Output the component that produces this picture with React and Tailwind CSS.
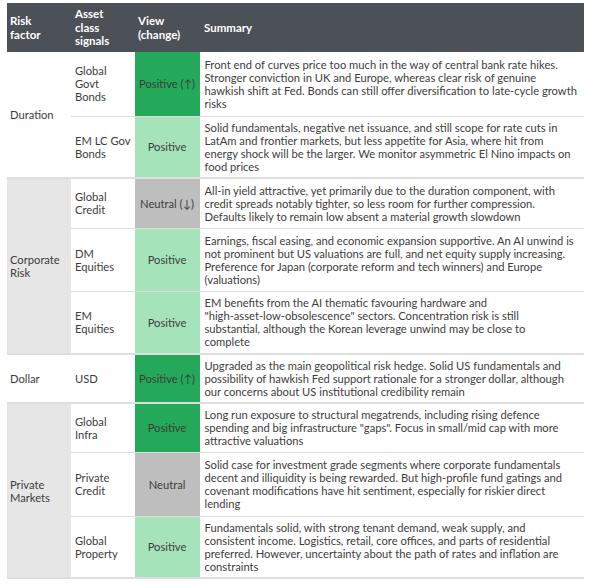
import React from 'react';

const rows = [
  {
    group: 'Duration', span: 2, shaded: false, h: 'h-[64px]',
    asset: ['Global', 'Govt', 'Bonds'], view: 'Positive (↑)', tone: 'dark',
    text: [
      'Front end of curves price too much in the way of central bank rate hikes.',
      'Stronger conviction in UK and Europe, whereas clear risk of genuine',
      'hawkish shift at Fed. Bonds can still offer diversification to late-cycle growth',
      'risks',
    ],
  },
  {
    asset: ['EM LC Gov', 'Bonds'], view: 'Positive', tone: 'light', last: true, h: 'h-[62px]',
    text: [
      'Solid fundamentals, negative net issuance, and still scope for rate cuts in',
      'LatAm and frontier markets, but less appetite for Asia, where hit from',
      'energy shock will be the larger. We monitor asymmetric El Nino impacts on',
      'food prices',
    ],
  },
  {
    group: 'Corporate Risk', span: 3, shaded: true, h: 'h-[50px]',
    asset: ['Global', 'Credit'], view: 'Neutral (↓)', tone: 'gray',
    text: [
      'All-in yield attractive, yet primarily due to the duration component, with',
      'credit spreads notably tighter, so less room for further compression.',
      'Defaults likely to remain low absent a material growth slowdown',
    ],
  },
  {
    asset: ['DM', 'Equities'], view: 'Positive', tone: 'light', h: 'h-[63px]',
    text: [
      'Earnings, fiscal easing, and economic expansion supportive. An AI unwind is',
      'not prominent but US valuations are full, and net equity supply increasing.',
      'Preference for Japan (corporate reform and tech winners) and Europe',
      '(valuations)',
    ],
  },
  {
    asset: ['EM', 'Equities'], view: 'Positive', tone: 'light', last: true, h: 'h-[63px]',
    text: [
      'EM benefits from the AI thematic favouring hardware and',
      '"high-asset-low-obsolescence" sectors. Concentration risk is still',
      'substantial, although the Korean leverage unwind may be close to',
      'complete',
    ],
  },
  {
    group: 'Dollar', span: 1, shaded: false, h: 'h-[49px]',
    asset: ['USD'], view: 'Positive (↑)', tone: 'dark', last: true,
    text: [
      'Upgraded as the main geopolitical risk hedge. Solid US fundamentals and',
      'possibility of hawkish Fed support rationale for a stronger dollar, although',
      'our concerns about US institutional credibility remain',
    ],
  },
  {
    group: 'Private Markets', span: 3, shaded: true, h: 'h-[49px]',
    asset: ['Global', 'Infra'], view: 'Positive', tone: 'dark',
    text: [
      'Long run exposure to structural megatrends, including rising defence',
      'spending and big infrastructure "gaps". Focus in small/mid cap with more',
      'attractive valuations',
    ],
  },
  {
    asset: ['Private', 'Credit'], view: 'Neutral', tone: 'gray', h: 'h-[64px]',
    text: [
      'Solid case for investment grade segments where corporate fundamentals',
      'decent and illiquidity is being rewarded. But high-profile fund gatings and',
      'covenant modifications have hit sentiment, especially for riskier direct',
      'lending',
    ],
  },
  {
    asset: ['Global', 'Property'], view: 'Positive', tone: 'light', last: true, h: 'h-[62px]',
    text: [
      'Fundamentals solid, with strong tenant demand, weak supply, and',
      'consistent income. Logistics, retail, core offices, and parts of residential',
      'preferred. However, uncertainty about the path of rates and inflation are',
      'constraints',
    ],
  },
];

const toneBg = {
  dark: 'bg-[#24a95b]',
  light: 'bg-[#a5e4ba]',
  gray: 'bg-[#bebebe]',
};

export default function App() {
  return (
    <div className="w-[600px] h-[588px] bg-white pt-[3px] pl-[7px] font-['Lato','Liberation_Sans',sans-serif] text-[11.2px] leading-[13px] text-[#3d3d3d]">
      <table className="w-[577px] table-fixed border-collapse">
        <colgroup>
          <col className="w-[64px]" />
          <col className="w-[63px]" />
          <col className="w-[66px]" />
          <col />
        </colgroup>
        <thead>
          <tr className="h-[49px] bg-[#4c5158] text-white text-left text-[11.5px] leading-[13.5px]">
            <th className="px-[3px] align-middle font-bold">Risk<br />factor</th>
            <th className="px-[4px] align-middle font-bold">Asset<br />class<br />signals</th>
            <th className="px-[4px] align-middle font-bold">View<br />(change)</th>
            <th className="px-[4px] align-middle font-bold">Summary</th>
          </tr>
        </thead>
        <tbody>
          {rows.map((r, i) => {
            const bottom = r.last ? 'border-b-2 border-b-[#dedede]' : 'border-b border-b-[#dedede]';
            return (
              <tr key={i} className={r.h}>
                {r.group && (
                  <td
                    rowSpan={r.span}
                    className={`px-[3px] align-middle border-b-2 border-b-[#dedede] ${r.shaded ? 'bg-[#e6e6e6]' : 'bg-white'}`}
                  >
                    {r.group.split(' ').map((w) => (
                      <div key={w}>{w}</div>
                    ))}
                  </td>
                )}
                <td className={`px-[4px] py-0 align-middle whitespace-nowrap ${bottom}`}>
                  {r.asset.map((w) => (
                    <div key={w}>{w}</div>
                  ))}
                </td>
                <td className={`px-[2px] py-0 align-middle text-center whitespace-nowrap border-x border-x-white ${toneBg[r.tone]} ${bottom}`}>
                  {r.view}
                </td>
                <td className={`px-[4px] py-0 align-middle ${bottom}`}>
                  {r.text.map((l, j) => (
                    <div key={j} className="whitespace-nowrap">{l}</div>
                  ))}
                </td>
              </tr>
            );
          })}
        </tbody>
      </table>
    </div>
  );
}
